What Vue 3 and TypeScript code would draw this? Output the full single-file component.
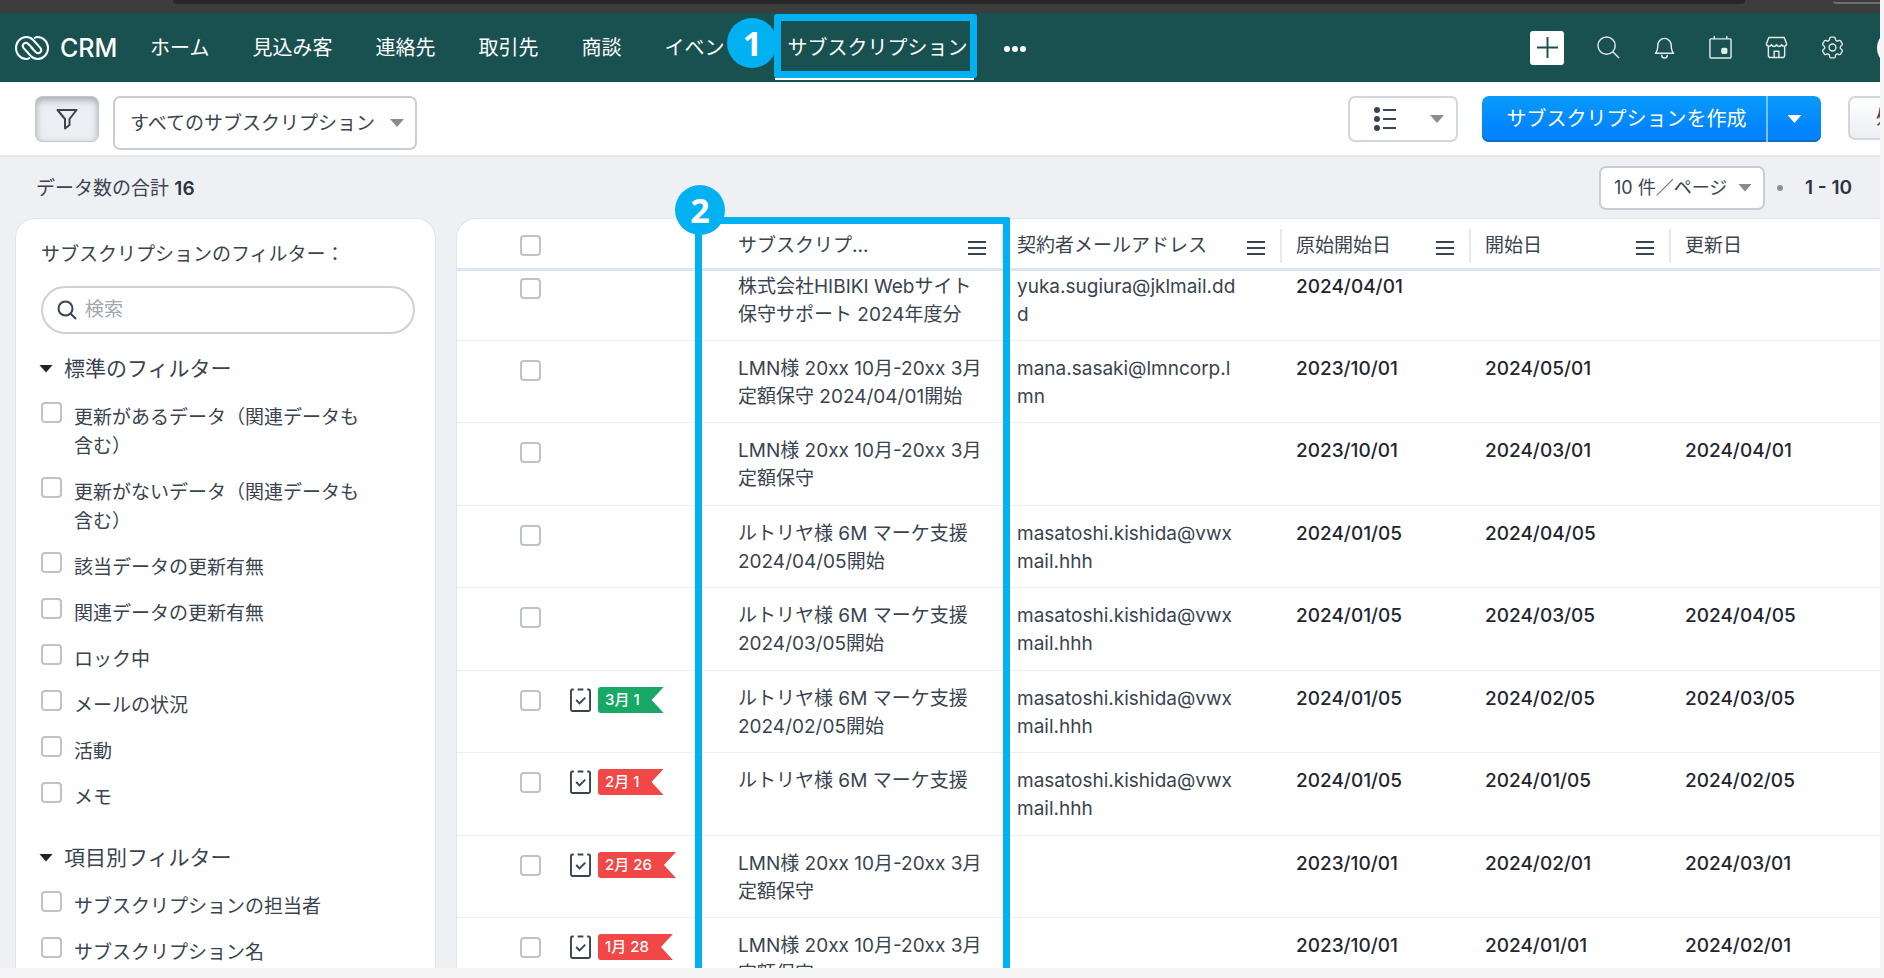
<script setup lang="ts">
import { ref } from 'vue'

interface Flag {
  label: string
  tone: 'green' | 'red'
}

interface Row {
  name: string
  email: string
  first: string
  start: string
  renewal: string
  flag?: Flag
}

const navItems = ['ホーム', '見込み客', '連絡先', '取引先', '商談', 'イベント']

const filterGroups = [
  {
    title: '標準のフィルター',
    items: [
      '更新があるデータ（関連データも含む）',
      '更新がないデータ（関連データも含む）',
      '該当データの更新有無',
      '関連データの更新有無',
      'ロック中',
      'メールの状況',
      '活動',
      'メモ',
    ],
  },
  {
    title: '項目別フィルター',
    items: ['サブスクリプションの担当者', 'サブスクリプション名'],
  },
]

const columns = [
  { key: 'name', label: 'サブスクリプ...', menu: true },
  { key: 'email', label: '契約者メールアドレス', menu: true },
  { key: 'first', label: '原始開始日', menu: true },
  { key: 'start', label: '開始日', menu: true },
  { key: 'renewal', label: '更新日', menu: false },
]

const kishida = 'masatoshi.kishida@vwxmail.hhh'

const rows: Row[] = [
  { name: '株式会社HIBIKI Webサイト保守サポート 2024年度分', email: 'yuka.sugiura@jklmail.ddd', first: '2024/04/01', start: '', renewal: '' },
  { name: 'LMN様 20xx 10月-20xx 3月定額保守 2024/04/01開始', email: 'mana.sasaki@lmncorp.lmn', first: '2023/10/01', start: '2024/05/01', renewal: '' },
  { name: 'LMN様 20xx 10月-20xx 3月定額保守', email: '', first: '2023/10/01', start: '2024/03/01', renewal: '2024/04/01' },
  { name: 'ルトリヤ様 6M マーケ支援 2024/04/05開始', email: kishida, first: '2024/01/05', start: '2024/04/05', renewal: '' },
  { name: 'ルトリヤ様 6M マーケ支援 2024/03/05開始', email: kishida, first: '2024/01/05', start: '2024/03/05', renewal: '2024/04/05' },
  { name: 'ルトリヤ様 6M マーケ支援 2024/02/05開始', email: kishida, first: '2024/01/05', start: '2024/02/05', renewal: '2024/03/05', flag: { label: '3月 1', tone: 'green' } },
  { name: 'ルトリヤ様 6M マーケ支援', email: kishida, first: '2024/01/05', start: '2024/01/05', renewal: '2024/02/05', flag: { label: '2月 1', tone: 'red' } },
  { name: 'LMN様 20xx 10月-20xx 3月定額保守', email: '', first: '2023/10/01', start: '2024/02/01', renewal: '2024/03/01', flag: { label: '2月 26', tone: 'red' } },
  { name: 'LMN様 20xx 10月-20xx 3月定額保守', email: '', first: '2023/10/01', start: '2024/01/01', renewal: '2024/02/01', flag: { label: '1月 28', tone: 'red' } },
]

const query = ref('')
const view = ref('all')
const perPage = ref('10')
</script>

<template>
  <div class="app">
    <div class="chrome">
      <div class="chrome-bar"></div>
      <div class="chrome-pill"></div>
    </div>

    <header class="topbar">
      <a class="brand" href="#">
        <svg class="logo" viewBox="0 0 34 24" fill="none" stroke="currentColor" stroke-width="2" stroke-linecap="round" aria-hidden="true">
          <path d="M14.5 22 C13.5 22.7 12.4 23 11.3 23 A10.3 11 0 0 1 11.3 1 C14 1 16.5 2.2 18.2 4 L25.3 11.8 C28 15 24 19 20.9 16.3 L16.5 11.8" />
          <path d="M19.5 2 C20.5 1.3 21.6 1 22.7 1 A10.3 11 0 0 1 22.7 23 C20 23 17.5 21.8 15.8 20 L8.7 12.2 C6 9 10 5 13.1 7.7 L17.5 12.2" />
        </svg>
        <span>CRM</span>
      </a>
      <nav class="nav">
        <a v-for="item in navItems" :key="item" href="#">{{ item }}</a>
        <a class="active" href="#">
          サブスクリプション
          <span class="callout-box"></span>
          <span class="callout-badge">1</span>
        </a>
      </nav>
      <button class="more" type="button" aria-label="その他">
        <svg viewBox="0 0 24 8" fill="currentColor"><circle cx="4" cy="4" r="3" /><circle cx="12" cy="4" r="3" /><circle cx="20" cy="4" r="3" /></svg>
      </button>
      <div class="tools">
        <button class="add" type="button" aria-label="作成">
          <svg viewBox="0 0 24 24" fill="none" stroke="currentColor" stroke-width="2"><path d="M12 1v22M1 12h22" /></svg>
        </button>
        <button type="button" aria-label="検索">
          <svg viewBox="0 0 24 24" fill="none" stroke="currentColor" stroke-width="1.5"><circle cx="10" cy="10" r="9" /><path d="M16.5 16.5 23 23" /></svg>
        </button>
        <button type="button" aria-label="通知">
          <svg viewBox="0 0 24 24" fill="none" stroke="currentColor" stroke-width="1.5" stroke-linejoin="round"><path d="M2.5 18c2-2 2.5-4 2.5-8a7 7.5 0 0 1 14 0c0 4 .5 6 2.5 8zM9 19.5c0 4.500 6 4.500 6 0" /></svg>
        </button>
        <button type="button" aria-label="カレンダー">
          <svg viewBox="0 0 24 24" fill="none" stroke="currentColor" stroke-width="1.5"><rect x="1" y="3" width="22" height="20" rx="1" /><path d="M5.5 0v3M18.5 0v3" /><rect x="13.5" y="13" width="5" height="5" rx="1" fill="currentColor" /></svg>
        </button>
        <button type="button" aria-label="マーケットプレイス">
          <svg viewBox="0 0 24 24" fill="none" stroke="currentColor" stroke-width="1.5" stroke-linejoin="round"><path d="M4 1.5h16l2.500 6.500c0 3-4 3.500-5.200 1-1.300 2.500-4.300 2.500-5.300 0-1 2.500-4 2.500-5.300 0C5.500 11.500 1.500 11 1.500 8zM3.500 11v9a2.500 2.500 0 0 0 2.500 2.500h12a2.500 2.500 0 0 0 2.500-2.500v-9M9.500 22.500V16h5v6.500" /></svg>
        </button>
        <button type="button" aria-label="設定">
          <svg viewBox="2 2 20 20" fill="none" stroke="currentColor" stroke-width="1.2" stroke-linejoin="round">
            <path d="M9.594 3.94c.09-.542.56-.94 1.11-.94h2.593c.55 0 1.02.398 1.11.94l.213 1.281c.063.374.313.686.645.87.074.04.147.083.22.127.325.196.72.257 1.075.124l1.217-.456a1.125 1.125 0 0 1 1.37.49l1.296 2.247a1.125 1.125 0 0 1-.26 1.431l-1.003.827c-.293.241-.438.613-.43.992a7.723 7.723 0 0 1 0 .255c-.008.378.137.75.43.991l1.004.827c.424.35.534.955.26 1.43l-1.298 2.247a1.125 1.125 0 0 1-1.369.491l-1.217-.456c-.355-.133-.75-.072-1.076.124a6.47 6.47 0 0 1-.22.128c-.331.183-.581.495-.644.869l-.213 1.281c-.09.543-.56.94-1.11.94h-2.594c-.55 0-1.019-.398-1.11-.94l-.213-1.281c-.062-.374-.312-.686-.644-.87a6.52 6.52 0 0 1-.22-.127c-.325-.196-.72-.257-1.076-.124l-1.217.456a1.125 1.125 0 0 1-1.369-.49l-1.297-2.247a1.125 1.125 0 0 1 .26-1.431l1.004-.827c.292-.24.437-.613.43-.991a6.932 6.932 0 0 1 0-.255c.007-.38-.138-.751-.43-.992l-1.004-.827a1.125 1.125 0 0 1-.26-1.43l1.297-2.247a1.125 1.125 0 0 1 1.37-.491l1.216.456c.356.133.751.072 1.076-.124.072-.044.146-.086.22-.128.332-.183.582-.495.644-.869l.214-1.28Z" />
            <circle cx="12" cy="12" r="3" />
          </svg>
        </button>
        <span class="avatar"></span>
      </div>
    </header>

    <div class="toolbar">
      <button class="filter-toggle" type="button" aria-label="フィルター">
        <svg viewBox="0 0 22 22" fill="none" stroke="currentColor" stroke-width="2" stroke-linejoin="round"><path d="M1.5 2h19l-7 9v6l-4.500 3.500V11z" /></svg>
      </button>
      <div class="select view-select">
        <select v-model="view" aria-label="表示">
          <option value="all">すべてのサブスクリプション</option>
        </select>
        <span class="caret"></span>
      </div>
      <div class="actions">
        <button class="layout" type="button" aria-label="リスト表示">
          <svg viewBox="0 0 22 26" fill="none" stroke="currentColor" stroke-width="2" aria-hidden="true">
            <path d="M9 4h13M9 13h13M9 22h13" />
            <g fill="currentColor" stroke="none"><circle cx="3" cy="4" r="3" /><circle cx="3" cy="13" r="3" /><circle cx="3" cy="22" r="3" /></g>
          </svg>
          <span class="caret"></span>
        </button>
        <div class="create">
          <button class="create-main" type="button">サブスクリプションを作成</button>
          <button class="create-more" type="button" aria-label="作成メニュー"><span class="caret white"></span></button>
        </div>
        <button class="process" type="button">処理</button>
      </div>
    </div>

    <div class="summary">
      <p>データ数の合計 <b>16</b></p>
      <div class="pager">
        <div class="select page-select">
          <select v-model="perPage" aria-label="1ページの件数">
            <option value="10">10 件／ページ</option>
          </select>
          <span class="caret"></span>
        </div>
        <span class="dot"></span>
        <b>1 - 10</b>
      </div>
    </div>

    <div class="body">
      <aside class="sidebar">
        <h2>サブスクリプションのフィルター：</h2>
        <label class="search">
          <svg viewBox="0 0 20 20" fill="none" stroke="currentColor" stroke-width="2"><circle cx="8.5" cy="8.5" r="7" /><path d="M13.5 13.5 19 19" /></svg>
          <input v-model="query" type="text" placeholder="検索" aria-label="検索" />
        </label>
        <section v-for="group in filterGroups" :key="group.title">
          <h3><span class="caret black"></span>{{ group.title }}</h3>
          <label v-for="item in group.items" :key="item" class="check">
            <input type="checkbox" />
            <span>{{ item }}</span>
          </label>
        </section>
      </aside>

      <main class="panel">
        <div class="table-wrap">
          <table>
            <colgroup>
              <col class="c-check" /><col class="c-flag" /><col class="c-name" /><col class="c-email" /><col class="c-first" /><col class="c-start" /><col />
            </colgroup>
            <thead>
              <tr>
                <th class="pick"><input type="checkbox" aria-label="すべて選択" /></th>
                <th></th>
                <th v-for="col in columns" :key="col.key" :class="col.key">
                  <div class="head" :class="{ last: !col.menu }">
                    <span>{{ col.label }}</span>
                    <button v-if="col.menu" type="button" :aria-label="col.label + 'のメニュー'">
                      <svg viewBox="0 0 18 14" stroke="currentColor" stroke-width="2"><path d="M0 1h18M0 7h18M0 13h18" /></svg>
                    </button>
                  </div>
                </th>
              </tr>
            </thead>
            <tbody>
              <tr v-for="(row, i) in rows" :key="i">
                <td class="pick"><input type="checkbox" :aria-label="row.name" /></td>
                <td class="task">
                  <div v-if="row.flag" class="task-in">
                    <svg viewBox="0 0 22 26" fill="none" stroke="currentColor" stroke-width="2"><path d="M4 2H2.5Q1 2 1 3.5V23q0 1.500 1.500 1.500h17q1.500 0 1.500-1.500V3.500Q21 2 19.500 2H18M8 2h6M6.500 13l3.500 3.500 6-6" /></svg>
                    <span class="flag" :class="row.flag.tone">{{ row.flag.label }}</span>
                  </div>
                </td>
                <td class="name">{{ row.name }}</td>
                <td class="email">{{ row.email }}</td>
                <td class="date">{{ row.first }}</td>
                <td class="date">{{ row.start }}</td>
                <td class="date">{{ row.renewal }}</td>
              </tr>
            </tbody>
          </table>
        </div>
        <div class="column-callout"></div>
        <span class="callout-badge two">2</span>
      </main>
    </div>
  </div>
</template>

<style>
body {
  margin: 0;
  background: #f5f5f6;
}
</style>

<style scoped>
.app {
  display: flex;
  flex-direction: column;
  height: calc(100vh - 10px);
  margin-right: 4px;
  overflow: hidden;
  background: #eef0f4;
  color: #3a4350;
  font: 19px/28px Inter, "Noto Sans CJK JP", sans-serif;
}
.app *,
.app *::before,
.app *::after {
  box-sizing: border-box;
}
button {
  display: flex;
  align-items: center;
  justify-content: center;
  padding: 0;
  border: 0;
  background: none;
  color: inherit;
  font: inherit;
}
a {
  color: inherit;
  text-decoration: none;
}
h2,
h3,
p {
  margin: 0;
  font-size: 19px;
  font-weight: 400;
}

.chrome {
  display: flex;
  flex: none;
  justify-content: space-between;
  height: 13px;
  padding-left: 173px;
  background: #3c3d3c;
}
.chrome-bar {
  flex: 1;
  height: 4px;
  margin-right: 88px;
  border-radius: 0 0 6px 6px;
  background: #262726;
}
.chrome-pill {
  width: 47px;
  height: 4px;
  border-bottom: 2px solid #6d7078;
  border-bottom-left-radius: 12px;
}

.topbar {
  display: flex;
  flex: none;
  align-items: center;
  height: 69px;
  padding-left: 15px;
  background: #18514f;
  color: #fff;
}
.brand {
  display: flex;
  align-items: center;
  gap: 11px;
  width: 135px;
  font-size: 25px;
  font-weight: 500;
}
.logo {
  width: 34px;
  height: 24px;
}
.nav {
  display: flex;
  gap: 43px;
  height: 100%;
  font-size: 20px;
  line-height: 71px;
  white-space: nowrap;
}
.active {
  position: relative;
}
.active::after {
  position: absolute;
  right: -7px;
  bottom: 2px;
  left: -12px;
  height: 2px;
  background: #fff;
  content: "";
}
.callout-box {
  position: absolute;
  top: 1px;
  right: -10px;
  bottom: 4px;
  left: -13px;
  border: 7px solid #02b1f2;
  border-radius: 3px;
}
.callout-badge {
  position: absolute;
  top: 5px;
  left: -60px;
  width: 50px;
  height: 50px;
  border-radius: 50%;
  background: #02b1f2;
  color: #fff;
  font: 700 34px/50px "Open Sans", sans-serif;
  text-align: center;
}
.more {
  height: 100%;
  padding-top: 2px;
  margin-left: 36px;
}
.more svg {
  width: 24px;
  height: 8px;
}
.tools {
  display: flex;
  align-items: center;
  gap: 33px;
  margin-left: auto;
}
.tools svg {
  width: 23px;
  height: 23px;
  color: #e3e9e9;
}
.tools .add {
  width: 34px;
  height: 34px;
  border-radius: 3px;
  background: #fff;
}
.tools .add svg {
  color: #18514f;
}
.avatar {
  width: 36px;
  height: 36px;
  margin-right: -33px;
  border-radius: 50%;
  background: #fff;
}

.toolbar {
  display: flex;
  flex: none;
  align-items: flex-start;
  gap: 14px;
  height: 75px;
  padding: 14px 0 0 35px;
  border-bottom: 2px solid #e6e8ee;
  background: #fff;
}
.filter-toggle {
  width: 64px;
  height: 46px;
  border: 1px solid #c3c7cd;
  border-radius: 7px;
  background: #eceef3;
  box-shadow: inset 0 3px 7px #a4a8ae;
}
.filter-toggle svg {
  width: 22px;
  height: 22px;
}
.select {
  position: relative;
  display: flex;
  align-items: center;
}
.select select {
  height: 100%;
  width: 100%;
  border: 2px solid #c9cdd3;
  border-radius: 7px;
  appearance: none;
  background: #fff;
  color: inherit;
  font: inherit;
}
.select .caret {
  position: absolute;
  right: 13px;
  pointer-events: none;
}
.view-select {
  width: 304px;
  height: 54px;
}
.view-select select {
  padding: 2px 34px 0 15px;
}
.caret {
  width: 14px;
  height: 8px;
  background: #878c94;
  clip-path: polygon(0 0, 100% 0, 50% 100%);
}
.caret.white {
  background: #fff;
}
.caret.black {
  background: #20242a;
}
.actions {
  display: flex;
  flex: none;
  margin-left: auto;
}
.layout {
  gap: 34px;
  width: 110px;
  height: 46px;
  padding-left: 12px;
  margin-right: 24px;
  border: 2px solid #d3d6db;
  border-radius: 7px;
}
.layout svg {
  width: 22px;
  height: 26px;
}
.create {
  display: flex;
  height: 46px;
  overflow: hidden;
  border-radius: 7px;
  background: linear-gradient(#089bfa, #0283ff 75%);
  box-shadow: inset 0 -2px #0f6ec6;
  color: #fff;
  font-size: 20px;
}
.create-main {
  width: 284px;
  padding-left: 5px;
}
.create-more {
  width: 55px;
  border-left: 2px solid #7cc3fd;
}
.process {
  justify-content: flex-start;
  width: 92px;
  height: 44px;
  margin: 0 -60px 0 27px;
  padding-left: 26px;
  border: 2px solid #d3d6db;
  border-radius: 7px;
  background: linear-gradient(#fff, #eceef3);
}

.summary {
  display: flex;
  flex: none;
  align-items: center;
  justify-content: space-between;
  height: 61px;
  padding: 0 28px 0 36px;
}
.summary p {
  padding-top: 2px;
}
.summary b {
  font-weight: 600;
  color: #2c333d;
}
.pager {
  display: flex;
  align-items: center;
  gap: 12px;
}
.page-select {
  width: 166px;
  height: 44px;
  font-size: 18px;
}
.page-select select {
  padding: 0 30px 0 13px;
}
.dot {
  width: 6px;
  height: 6px;
  margin-right: 10px;
  border-radius: 50%;
  background: #8b9097;
}

.body {
  display: flex;
  flex: 1;
  gap: 20px;
  min-height: 0;
  padding-left: 15px;
}
.sidebar {
  flex: none;
  width: 421px;
  padding: 22px 20px 0 25px;
  overflow: hidden;
  border: 1px solid #dbe6f1;
  border-bottom: 0;
  border-radius: 20px 20px 0 0;
  background: #fff;
}
.search {
  display: flex;
  align-items: center;
  gap: 8px;
  height: 48px;
  margin-top: 17px;
  padding: 0 14px;
  border: 2px solid #cdd0d5;
  border-radius: 24px;
}
.search svg {
  flex: none;
  width: 20px;
  height: 20px;
}
.search input {
  flex: 1;
  min-width: 0;
  padding: 0;
  border: 0;
  outline: 0;
  color: inherit;
  font: inherit;
}
.search input::placeholder {
  color: #a3a7ae;
}
.sidebar h3 {
  display: flex;
  align-items: center;
  gap: 11px;
  margin: 20px 0 19px -2px;
  font-size: 21px;
  line-height: 29px;
}
.sidebar section + section {
  margin-top: 31px;
}
.sidebar section + section h3 {
  margin-top: 0;
}
.check {
  display: flex;
  gap: 12px;
  align-items: flex-start;
  padding-right: 42px;
  line-height: 29px;
}
.check span {
  padding-top: 1px;
}
.check + .check {
  margin-top: 16px;
}
input[type="checkbox"] {
  flex: none;
  width: 21px;
  height: 21px;
  margin: 0;
  border: 2px solid #bfc3c9;
  border-radius: 4px;
  appearance: none;
  background: #fff;
}

.panel {
  position: relative;
  flex: 1;
  min-width: 0;
}
.table-wrap {
  height: 100%;
  overflow: hidden;
  border: 1px solid #dbe6f1;
  border-width: 1px 0 0 1px;
  border-radius: 20px 0 0 0;
  background: #fff;
}
table {
  width: 100%;
  border-collapse: separate;
  border-spacing: 0;
  table-layout: fixed;
}
.c-check {
  width: 99px;
}
.c-flag {
  width: 147px;
}
.c-name {
  width: 300px;
}
.c-email {
  width: 279px;
}
.c-first {
  width: 189px;
}
.c-start {
  width: 200px;
}
th {
  height: 52px;
  padding: 4px 0 0;
  border-bottom: 3px solid #dce5f0;
  font-weight: 400;
  text-align: left;
  vertical-align: middle;
}
.head {
  display: flex;
  align-items: center;
  justify-content: space-between;
  height: 34px;
  padding: 0 15px 0 14px;
  border-right: 2px solid #e6eaf0;
  white-space: nowrap;
}
.head.last {
  border: 0;
}
.head button {
  height: 14px;
  margin-top: 4px;
}
.head svg {
  width: 18px;
  height: 14px;
}
th.name .head {
  padding-left: 35px;
}
td {
  height: 82px;
  padding: 14px 0 0 14px;
  border-bottom: 1px solid #eceef0;
  vertical-align: top;
}
tr:nth-child(odd) td {
  height: 83px;
}
tr:first-child td {
  height: 70px;
  padding-top: 2px;
}
.pick {
  padding-left: 63px;
  line-height: 0;
}
td.pick {
  padding-top: 19px;
  padding-left: 63px;
}
tr:first-child td.pick {
  padding-top: 7px;
}
td.name {
  padding-right: 14px;
  padding-left: 35px;
}
td.email {
  padding-right: 38px;
  word-break: break-all;
}
td.date {
  color: #1f2630;
  font-weight: 500;
}
td.task {
  padding-top: 16px;
}
.task-in {
  display: flex;
  align-items: center;
  gap: 7px;
}
.task-in svg {
  width: 21px;
  height: 26px;
}
.flag {
  padding: 0 24px 0 7px;
  border-radius: 3px 0 0 3px;
  clip-path: polygon(0 0, 100% 0, calc(100% - 12px) 50%, 100% 100%, 0 100%);
  color: #fff;
  font-size: 15px;
  font-weight: 500;
  line-height: 26px;
}
.flag.green {
  background: #18a967;
}
.flag.red {
  background: #f24747;
}
.column-callout {
  position: absolute;
  top: -1px;
  bottom: 0;
  left: 239px;
  width: 315px;
  border: 7px solid #02b1f2;
  border-bottom: 0;
  border-radius: 3px 3px 0 0;
  pointer-events: none;
}
.callout-badge.two {
  top: -33px;
  left: 219px;
}
</style>
